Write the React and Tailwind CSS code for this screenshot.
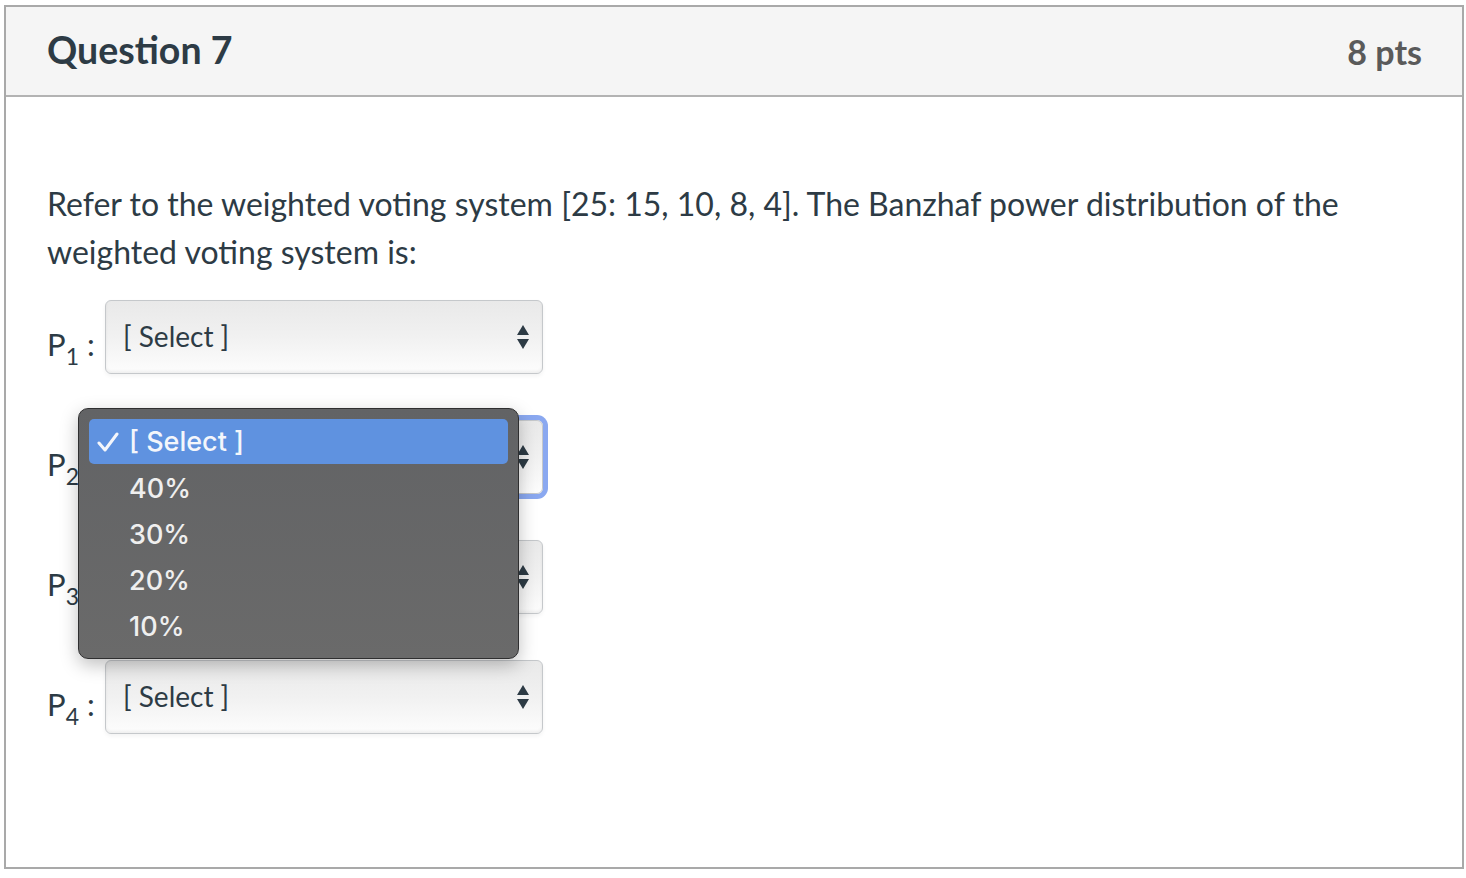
import React from 'react';

const lato = { fontFamily: 'Lato, "Open Sans", sans-serif' };

const Arrows = () => (
  <svg width="14" height="26" viewBox="0 0 14 26" className="shrink-0">
    <path d="M7 1 L13 11 L1 11 Z" fill="#2d3b45" />
    <path d="M1 15 L13 15 L7 25 Z" fill="#2d3b45" />
  </svg>
);

const SelectBox = ({ focused }) => (
  <div
    className={`w-[438px] h-[74px] rounded-[6px] border border-[#c5c8cb] bg-gradient-to-b from-[#e9e9e9] via-[#f1f1f1] to-[#fdfdfd] flex items-center justify-between pl-[17px] pr-[12px] ${
      focused
        ? 'shadow-[0_0_0_5px_#8aa8f0]'
        : 'shadow-[inset_0_-2px_3px_rgba(0,0,0,0.06),0_2px_4px_rgba(0,0,0,0.05)]'
    }`}
  >
    <span className="text-[28px] text-[#2d3b45] -mt-[2px]">[ Select ]</span>
    <Arrows />
  </div>
);

const Row = ({ n, focused }) => (
  <div className="flex items-center">
    <div className="w-[58px] text-[31px] text-[#2d3b45] pt-[14px] leading-none whitespace-nowrap">
      P<sub className="text-[23px] align-[-4px]">{n}</sub> :
    </div>
    <SelectBox focused={focused} />
  </div>
);

const options = ['40%', '30%', '20%', '10%'];

export default function App() {
  return (
    <div className="w-[1466px] h-[878px] bg-white pl-[4px] pt-[5px]" style={lato}>
      <div className="w-[1460px] h-[864px] border-2 border-[#a9a9a9] flex flex-col">
        {/* Header */}
        <div className="h-[90px] bg-[#f5f5f5] border-b-2 border-[#b3b3b3] flex items-center justify-between pl-[41px] pr-[40px] shrink-0">
          <h2 className="text-[37.5px] font-bold text-[#2d3b45] -mt-[1px]">Question 7</h2>
          <span className="text-[34px] font-bold text-[#5a5a5a]">8 pts</span>
        </div>

        {/* Body */}
        <div className="relative pl-[41px] pt-[83px]">
          <p className="text-[32px] leading-[48px] text-[#2d3b45] w-[1340px]">
            Refer to the weighted voting system [25: 15, 10, 8, 4]. The Banzhaf power distribution of the weighted voting system is:
          </p>

          <div className="mt-[24px] flex flex-col gap-[46px]">
            <Row n={1} />
            <Row n={2} focused />
            <Row n={3} />
            <Row n={4} />
          </div>

          {/* open dropdown menu */}
          <div
            className="absolute left-[72px] top-[311px] w-[441px] h-[251px] rounded-[10px] border border-[#2f2f30] bg-gradient-to-b from-[#626365] to-[#6a6a6a] shadow-[0_6px_18px_rgba(0,0,0,0.25)] px-[10px] pt-[10px]"
            style={{ fontFamily: 'Inter, "Liberation Sans", sans-serif' }}
          >
            <div className="h-[45px] rounded-[5px] bg-[#5f92e0] flex items-center pl-[8px] text-[27px] font-medium text-[#f4f6fb]">
              <svg width="22" height="20" viewBox="0 0 22 20" className="mr-[10px] mt-[1px]">
                <path d="M2 11 L8 18 L20 2" fill="none" stroke="#f4f6fb" strokeWidth="3" strokeLinecap="round" strokeLinejoin="round" />
              </svg>
              <span className="mt-[2px]">[ Select ]</span>
            </div>
            {options.map((o) => (
              <div key={o} className="h-[46px] flex items-center pl-[40px] pt-[4px] text-[27px] font-medium text-[#efefef]">
                {o}
              </div>
            ))}
          </div>
        </div>
      </div>
    </div>
  );
}
